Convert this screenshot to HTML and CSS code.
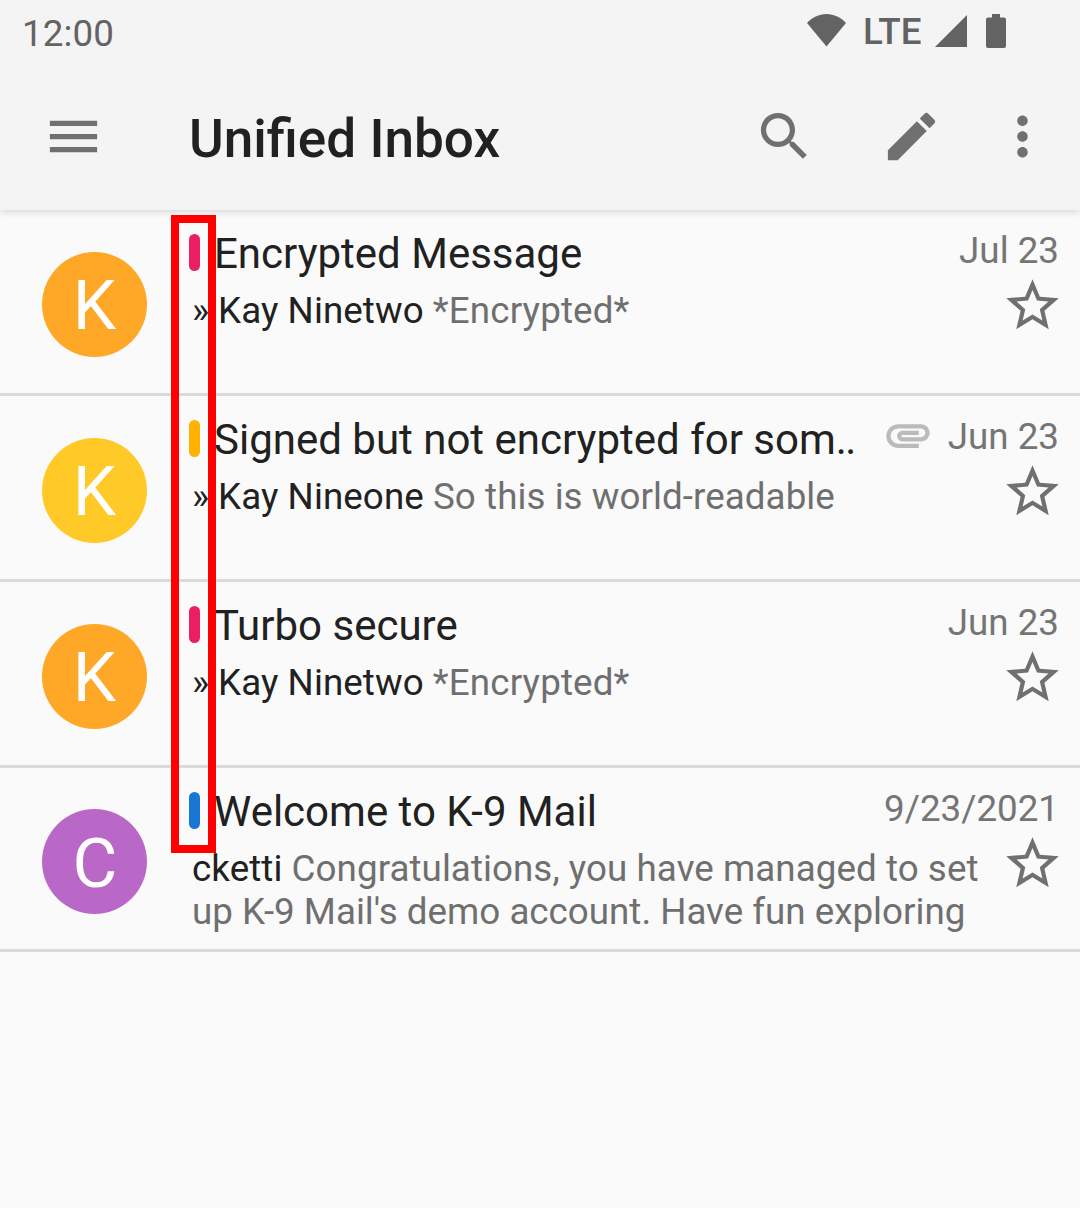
FILE: index.html
```html
<!DOCTYPE html>
<html lang="en">
<head>
<meta charset="utf-8">
<title>Unified Inbox</title>
<link rel="stylesheet" href="styles.css">
</head>
<body>
<svg class="defs" aria-hidden="true">
  <symbol id="star" viewBox="0 0 24 24"><path d="M22 9.24l-7.19-.62L12 2 9.19 8.63 2 9.24l5.46 4.73L5.82 21 12 17.27 18.18 21l-1.63-7.03L22 9.24zM12 15.4l-3.76 2.27 1-4.28-3.32-2.88 4.38-.38L12 6.1l1.71 4.04 4.38.38-3.32 2.88 1 4.28L12 15.4z"/></symbol>
</svg>
<header class="top">
  <div class="status">
    <span class="clock">12:00</span>
    <svg class="wifi" viewBox="0 0 39 33"><path d="M0 9C5 3.500 12 0 19.500 0S34 3.500 39 9L19.500 32.500z"/></svg>
    <span class="lte">LTE</span>
    <svg class="signal" viewBox="0 0 32 32"><path d="M32 0v32H0z"/></svg>
    <svg class="battery" viewBox="0 0 20 34"><path d="M6 0h8v3.500h4a2 2 0 0 1 2 2V32a2 2 0 0 1-2 2H2a2 2 0 0 1-2-2V5.500a2 2 0 0 1 2-2h4z"/></svg>
  </div>
  <div class="toolbar">
    <svg class="icon" viewBox="0 0 24 24"><path d="M3 18h18v-2H3v2zm0-5h18v-2H3v2zm0-7v2h18V6H3z"/></svg>
    <h1 class="title">Unified Inbox</h1>
    <svg class="icon" viewBox="0 0 24 24"><path d="M15.500 14h-.79l-.28-.27A6.471 6.471 0 0 0 16 9.500 6.500 6.500 0 1 0 9.500 16c1.610 0 3.090-.59 4.230-1.570l.27.28v.79l5 4.990L20.490 19l-4.990-5zm-6 0C7.010 14 5 11.990 5 9.500S7.010 5 9.500 5 14 7.010 14 9.500 11.990 14 9.500 14z"/></svg>
    <svg class="icon edit" viewBox="0 0 24 24"><path d="M3 17.250V21h3.750L17.810 9.940l-3.750-3.750L3 17.250zM20.710 7.040a.996.996 0 0 0 0-1.410l-2.340-2.340a.996.996 0 0 0-1.410 0l-1.830 1.830 3.750 3.750 1.830-1.830z"/></svg>
    <svg class="icon more" viewBox="0 0 24 24"><path d="M12 8c1.100 0 2-.9 2-2s-.9-2-2-2-2 .9-2 2 .9 2 2 2zm0 2c-1.100 0-2 .9-2 2s.9 2 2 2 2-.9 2-2-.9-2-2-2zm0 6c-1.100 0-2 .9-2 2s.9 2 2 2 2-.9 2-2-.9-2-2-2z"/></svg>
  </div>
</header>
<main class="list">
  <article class="row">
    <div class="avatar orange">K</div>
    <div class="content">
      <div class="head"><i class="chip pink"></i><span class="subject">Encrypted Message</span><time class="date">Jul 23</time></div>
      <div class="body"><p class="preview"><span class="to">»</span><span class="sender">Kay Ninetwo</span> <span class="status-note">*Encrypted*</span></p><svg class="star"><use href="#star"/></svg></div>
    </div>
  </article>
  <article class="row">
    <div class="avatar yellow">K</div>
    <div class="content">
      <div class="head"><i class="chip amber"></i><span class="subject">Signed but not encrypted for som<span class="dots">..</span></span><svg class="clip" viewBox="0 0 24 24"><path d="M2 12.500C2 9.460 4.460 7 7.500 7H18c2.210 0 4 1.790 4 4s-1.790 4-4 4H9.500C8.120 15 7 13.880 7 12.500S8.120 10 9.500 10H17v2H9.410c-.55 0-.55 1 0 1H18c1.100 0 2-.9 2-2s-.9-2-2-2H7.500C5.570 9 4 10.570 4 12.500S5.570 16 7.500 16H17v2H7.500C4.460 18 2 15.540 2 12.500z"/></svg><time class="date">Jun 23</time></div>
      <div class="body"><p class="preview"><span class="to">»</span><span class="sender">Kay Nineone</span> <span class="text">So this is world-readable</span></p><svg class="star"><use href="#star"/></svg></div>
    </div>
  </article>
  <article class="row">
    <div class="avatar orange">K</div>
    <div class="content">
      <div class="head"><i class="chip pink"></i><span class="subject">Turbo secure</span><time class="date">Jun 23</time></div>
      <div class="body"><p class="preview"><span class="to">»</span><span class="sender">Kay Ninetwo</span> <span class="status-note">*Encrypted*</span></p><svg class="star"><use href="#star"/></svg></div>
    </div>
  </article>
  <article class="row last">
    <div class="avatar purple">C</div>
    <div class="content">
      <div class="head"><i class="chip blue"></i><span class="subject">Welcome to K-9 Mail</span><time class="date">9/23/2021</time></div>
      <div class="body"><p class="preview"><span class="sender">cketti</span> <span class="text">Congratulations, you have managed to set</span><br>up K-9 Mail's demo account. Have fun exploring</p><svg class="star"><use href="#star"/></svg></div>
    </div>
  </article>
  <div class="highlight"></div>
</main>
</body>
</html>
```

FILE: styles.css
```css
* { box-sizing: border-box; }
body {
  margin: 0;
  min-height: 1208px;
  background: #fafafa;
  color: #212121;
  font-family: Roboto, sans-serif;
  overflow: hidden;
}
.defs { display: none; }
svg { display: block; flex: none; fill: #707070; }
.top {
  position: relative;
  height: 210px;
  background: #f4f4f4;
  box-shadow: 0 1px 8px rgba(0, 0, 0, .18);
}
.status {
  display: flex;
  height: 66px;
  padding: 0 74px 0 22px;
  color: #636363;
  font-size: 36.75px;
}
.status svg { fill: #636363; margin-top: 14px; }
.clock { flex: 1; line-height: 67px; letter-spacing: .1px; }
.wifi { width: 39px; height: 33px; }
.lte { width: 60px; margin-left: 17px; line-height: 63px; font-weight: 500; white-space: nowrap; }
.status .signal { width: 32px; height: 32px; margin: 15px 0 0 12px; }
.battery { width: 20px; height: 34px; margin-left: 19px; }
.toolbar {
  display: flex;
  align-items: center;
  height: 141px;
  padding: 0 26px 0 42px;
}
.icon { width: 63px; height: 63px; }
.title {
  flex: 1;
  margin: 5px 0 0 84px;
  font-size: 53.1px;
  font-weight: 500;
  line-height: 62px;
  white-space: nowrap;
}
.edit { margin-left: 64px; }
.more { margin-left: 48px; }
.list { position: relative; }
.row {
  display: flex;
  height: 186px;
  padding: 0 22px 0 42px;
  border-bottom: 3px solid #dadada;
}
.last { height: 184px; }
.avatar {
  flex: none;
  width: 105px;
  height: 105px;
  margin-top: 42px;
  border-radius: 50%;
  color: #fff;
  font-size: 69px;
  line-height: 107px;
  text-align: center;
}
.last .avatar { margin-top: 41px; line-height: 109px; padding-left: 1px; }
.orange { background: #ffa726; }
.yellow { background: #ffca28; }
.purple { background: #ba68c8; }
.content { flex: 1; min-width: 0; margin-left: 42px; padding-top: 18px; }
.head { display: flex; height: 50px; white-space: nowrap; }
.chip { flex: none; width: 11px; height: 37px; margin-top: 6px; border-radius: 5.5px; }
.pink { background: #e91e63; }
.amber { background: #ffb300; }
.blue { background: #1976d2; }
.subject { flex: 1; min-width: 0; margin-left: 14px; font-size: 42px; line-height: 52px; }
.dots { letter-spacing: -1.7px; }
.date { margin-right: -1px; font-size: 36.75px; line-height: 45px; color: #757575; }
.clip { width: 52px; height: 52px; margin: -5px 14px 0 0; fill: #bbb; }
.body { display: flex; margin-top: 11px; }
.preview {
  flex: 1;
  margin: 0 0 0 3px;
  color: #6f6f6f;
  font-size: 36.75px;
  line-height: 43px;
  white-space: nowrap;
}
.to { display: inline-block; width: 26px; color: #212121; }
.sender { color: #212121; letter-spacing: .08px; }
.text { letter-spacing: .06px; }
.status-note { letter-spacing: .15px; }
.star { width: 63px; height: 63px; margin: -15px -6px 0 0; }
.highlight {
  position: absolute;
  left: 171px;
  top: 5px;
  width: 45px;
  height: 638px;
  border: 8px solid #f00;
}
```
